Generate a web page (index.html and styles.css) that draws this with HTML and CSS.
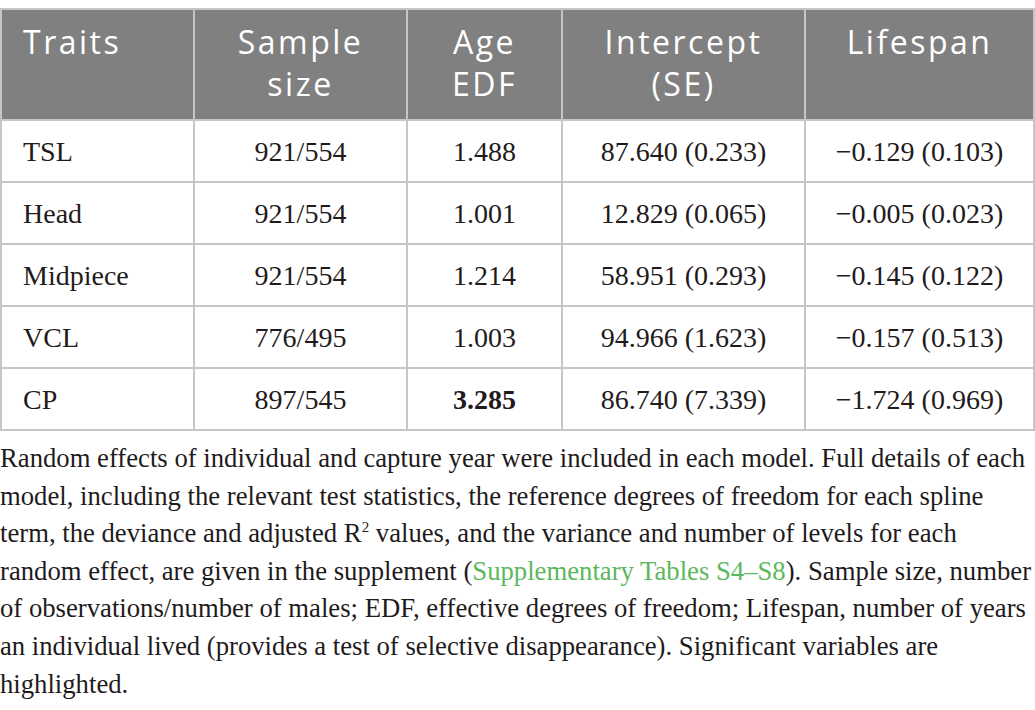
FILE: index.html
```html
<!DOCTYPE html>
<html>
<head>
    <title>Sperm traits and age</title>
    <link rel="stylesheet" href="styles.css">
</head>
<body>
    <div class="content">
        <table class="results">
            <thead>
                <tr>
                    <th class="first">Traits</th>
                    <th>Sample<br>size</th>
                    <th>Age<br>EDF</th>
                    <th>Intercept<br>(SE)</th>
                    <th>Lifespan</th>
                </tr>
            </thead>
            <tbody>
                <tr>
                    <td class="first">TSL</td>
                    <td>921/554</td>
                    <td>1.488</td>
                    <td>87.640 (0.233)</td>
                    <td>&minus;0.129 (0.103)</td>
                </tr>
                <tr>
                    <td class="first">Head</td>
                    <td>921/554</td>
                    <td>1.001</td>
                    <td>12.829 (0.065)</td>
                    <td>&minus;0.005 (0.023)</td>
                </tr>
                <tr>
                    <td class="first">Midpiece</td>
                    <td>921/554</td>
                    <td>1.214</td>
                    <td>58.951 (0.293)</td>
                    <td>&minus;0.145 (0.122)</td>
                </tr>
                <tr>
                    <td class="first">VCL</td>
                    <td>776/495</td>
                    <td>1.003</td>
                    <td>94.966 (1.623)</td>
                    <td>&minus;0.157 (0.513)</td>
                </tr>
                <tr>
                    <td class="first">CP</td>
                    <td>897/545</td>
                    <td><b>3.285</b></td>
                    <td>86.740 (7.339)</td>
                    <td>&minus;1.724 (0.969)</td>
                </tr>
            </tbody>
        </table>
        <p class="caption">Random effects of individual and capture year were included in each model. Full details of each model, including the relevant test statistics, the reference degrees of freedom for each spline term, the deviance and adjusted R<sup>2</sup> values, and the variance and number of levels for each random effect, are given in the supplement (<a href="#">Supplementary Tables S4&ndash;S8</a>). Sample size, number of observations/number of males; EDF, effective degrees of freedom; Lifespan, number of years an individual lived (provides a test of selective disappearance). Significant variables are highlighted.</p>
    </div>
</body>
</html>
```

FILE: styles.css
```css
body {
    margin: 0;
    padding: 0;
    background: #fff;
    color: #1f1b1c;
    font-family: "Liberation Serif", "Times New Roman", serif;
}
.content {
    padding-top: 8px;
    width: 1035px;
}
.results {
    width: 1035px;
    border-collapse: collapse;
    table-layout: fixed;
}
.results th,
.results td {
    border: 2px solid #c6c6c6;
}
.results th {
    background-color: #808080;
    color: #fff;
    font-family: "Open Sans", Lato, sans-serif;
    font-weight: normal;
    font-size: 32px;
    letter-spacing: 2.5px;
    line-height: 42px;
    height: 110px;
    padding: 11px 4px 14px;
    box-sizing: border-box;
    vertical-align: top;
    text-align: center;
}
.results th:nth-child(1) { width: 193px; }
.results th:nth-child(2) { width: 213px; }
.results th:nth-child(3) { width: 155px; }
.results th:nth-child(4) { width: 243px; }
.results td {
    height: 62px;
    font-size: 28px;
    text-align: center;
    vertical-align: middle;
    padding: 2px 8px 0;
    box-sizing: border-box;
}
.results .first {
    text-align: left;
    padding-left: 21px;
}
.caption {
    margin: 9px 0 0;
    font-size: 26.7px;
    line-height: 37.6px;
}
.caption a {
    color: #5cb85c;
    text-decoration: none;
}
.caption sup {
    font-size: 15px;
    line-height: 0;
}
```
